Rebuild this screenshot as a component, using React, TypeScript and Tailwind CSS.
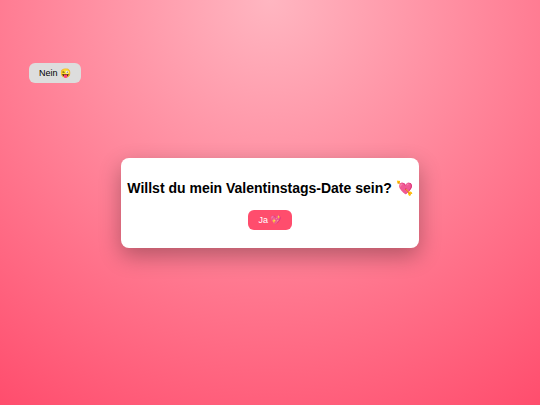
import { useState } from 'react';

export default function App() {
  const [accepted, setAccepted] = useState(false);
  const [noPosition, setNoPosition] = useState<{ left: string; top: string } | null>(null);

  // The "no" button runs away from the pointer
  const moveNoButton = () => {
    setNoPosition({
      left: `${Math.random() * 80}%`,
      top: `${Math.random() * 80}%`,
    });
  };

  const buttonClass = 'h-5 px-2.5 rounded-md text-[9px] leading-3 whitespace-nowrap cursor-pointer';

  return (
    <main className="relative min-h-screen flex items-center justify-center overflow-hidden bg-[radial-gradient(circle_at_top,#ffb6c1,#ff4d6d)] font-['Liberation_Sans',Arial,sans-serif]">
      {/* Card */}
      <div className="flex flex-col items-center gap-3 px-1.5 pt-5 pb-[18px] rounded-lg bg-white text-center text-black shadow-[0_8px_22px_rgba(0,0,0,0.3)]">
        <h1 className="text-sm leading-5 font-bold">
          {accepted ? 'Ich freue mich auf dich! 💖' : 'Willst du mein Valentinstags-Date sein? 💘'}
        </h1>
        {!accepted && (
          <button
            type="button"
            onClick={() => setAccepted(true)}
            className={`${buttonClass} bg-[#ff4d6d] text-white`}
          >
            Ja 💖
          </button>
        )}
      </div>

      {!accepted && (
        <button
          type="button"
          onMouseEnter={moveNoButton}
          onClick={moveNoButton}
          style={noPosition ?? undefined}
          className={`${buttonClass} absolute top-[63px] left-[29px] bg-[#dddddd] text-black`}
        >
          Nein 😜
        </button>
      )}
    </main>
  );
}
